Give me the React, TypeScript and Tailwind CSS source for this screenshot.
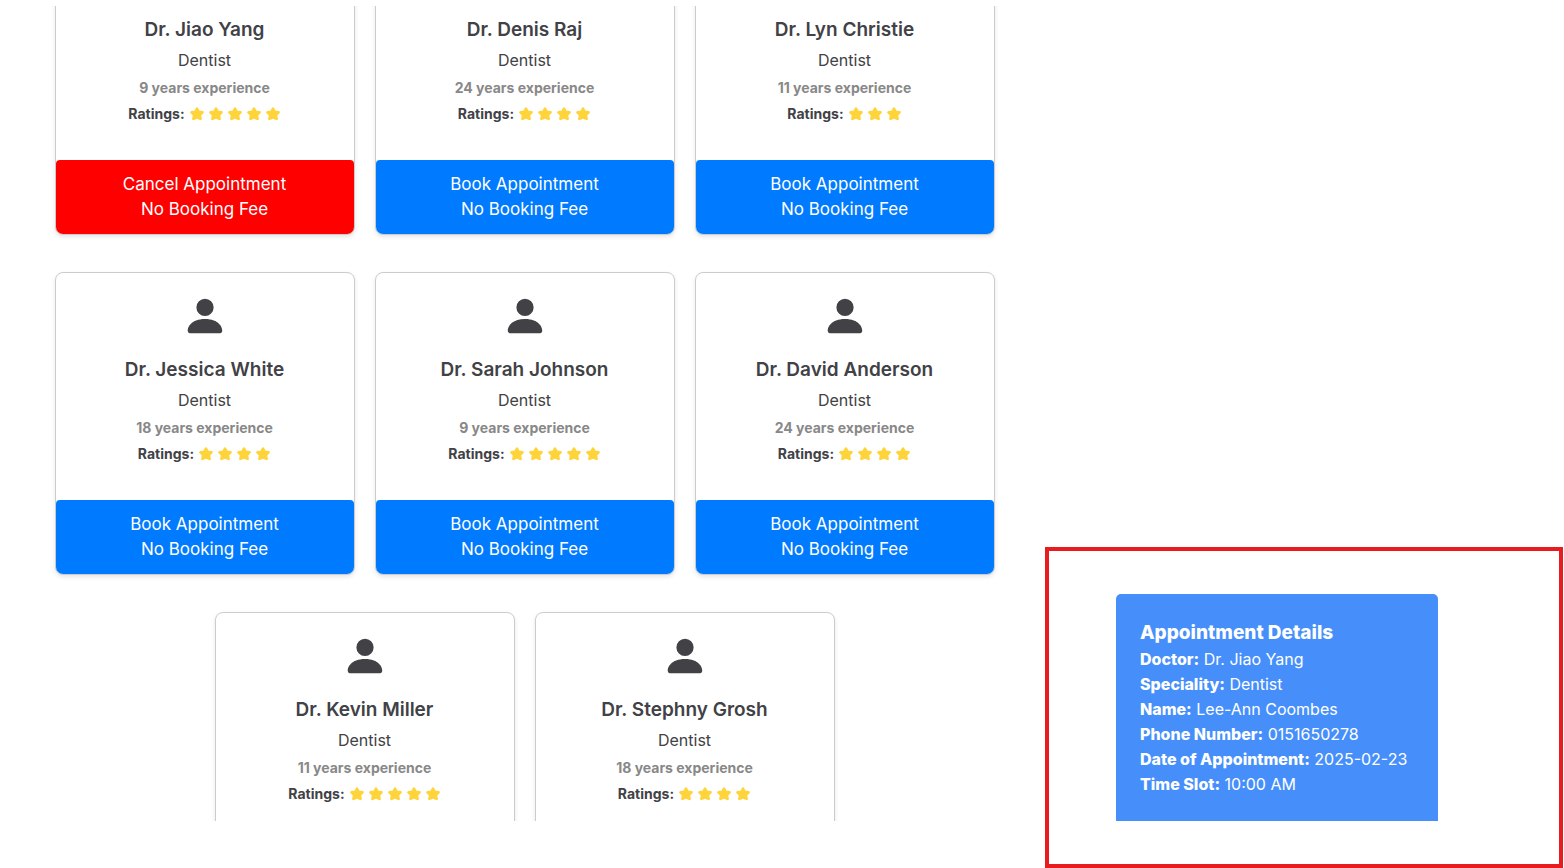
import { BsPersonFill } from "react-icons/bs";

type Doctor = {
  name: string;
  years: number;
  rating: number;
  booked?: boolean;
};

const doctors: Doctor[] = [
  { name: "Dr. Jiao Yang", years: 9, rating: 5, booked: true },
  { name: "Dr. Denis Raj", years: 24, rating: 4 },
  { name: "Dr. Lyn Christie", years: 11, rating: 3 },
  { name: "Dr. Jessica White", years: 18, rating: 4 },
  { name: "Dr. Sarah Johnson", years: 9, rating: 5 },
  { name: "Dr. David Anderson", years: 24, rating: 4 },
  { name: "Dr. Kevin Miller", years: 11, rating: 5 },
  { name: "Dr. Stephny Grosh", years: 18, rating: 4 },
];

const details = [
  ["Doctor:", "Dr. Jiao Yang"],
  ["Speciality:", "Dentist"],
  ["Name:", "Lee-Ann Coombes"],
  ["Phone Number:", "0151650278"],
  ["Date of Appointment:", "2025-02-23"],
  ["Time Slot:", "10:00 AM"],
];

function Star() {
  return (
    <svg viewBox="0 0 16 14" className="h-3.5 w-4" fill="currentColor" stroke="currentColor" strokeWidth="2.6" strokeLinejoin="round" aria-hidden="true">
      <path d="M8 1.7 9.6 4.9 13.5 5.4 10.8 8.1 11.6 11.9 8 10.2 4.4 11.9 5.2 8.1 2.5 5.4 6.4 4.9Z" />
    </svg>
  );
}

function DoctorCard({ doctor }: { doctor: Doctor }) {
  return (
    <article className="flex w-[300px] flex-col rounded-lg border border-[#ccc] bg-white text-center text-[#414146] shadow-[0_2px_4px_rgba(0,0,0,0.1)]">
      <BsPersonFill size={46} className="mx-auto mt-5" aria-hidden="true" />
      <h2 className="mt-[17px] text-[19px] leading-7 font-semibold">{doctor.name}</h2>
      <p className="mt-1 text-base leading-6">Dentist</p>
      <p className="mt-1 text-sm leading-6 font-bold text-[#888]">{doctor.years} years experience</p>
      <div className="mt-0.5 flex items-center justify-center text-sm leading-6 font-bold">
        <span className="mr-1">Ratings:</span>
        <span className="flex gap-[3px] text-[#ffd43b]" role="img" aria-label={`${doctor.rating} stars`}>
          {Array.from({ length: doctor.rating }, (_, i) => (
            <Star key={i} />
          ))}
        </span>
      </div>
      <button
        type="button"
        className={`mt-[34px] w-full cursor-pointer rounded-t rounded-b-[7px] py-3 text-[17px] leading-[25px] text-white ${
          doctor.booked ? "bg-[#ff0000]" : "bg-[#007bff]"
        }`}
      >
        <span className="block">{doctor.booked ? "Cancel Appointment" : "Book Appointment"}</span>
        <span className="block">No Booking Fee</span>
      </button>
    </article>
  );
}

export default function App() {
  return (
    <div className="flex h-screen overflow-hidden bg-white font-['Inter',sans-serif]">
      <main className="mt-1.5 mb-[47px] min-w-0 flex-1 overflow-y-auto pl-1 [scrollbar-width:none]">
        <div className="mx-auto -mt-[74px] flex max-w-[960px] flex-wrap justify-center gap-x-5 gap-y-[37px]">
          {doctors.map((doctor) => (
            <DoctorCard key={doctor.name} doctor={doctor} />
          ))}
        </div>
      </main>
      <aside className="mr-px flex w-[518px] shrink-0 items-start self-end border-4 border-[#e81c1e] py-[43px] pl-[67px]">
        <section className="w-[322px] rounded-t-[5px] bg-[#468ffb] p-6 text-white">
          <h2 className="text-[19px] leading-[29px] font-extrabold">Appointment Details</h2>
          {details.map(([label, value]) => (
            <p key={label} className="text-base leading-[25px] whitespace-nowrap">
              <strong className="font-extrabold">{label}</strong> {value}
            </p>
          ))}
        </section>
      </aside>
    </div>
  );
}
